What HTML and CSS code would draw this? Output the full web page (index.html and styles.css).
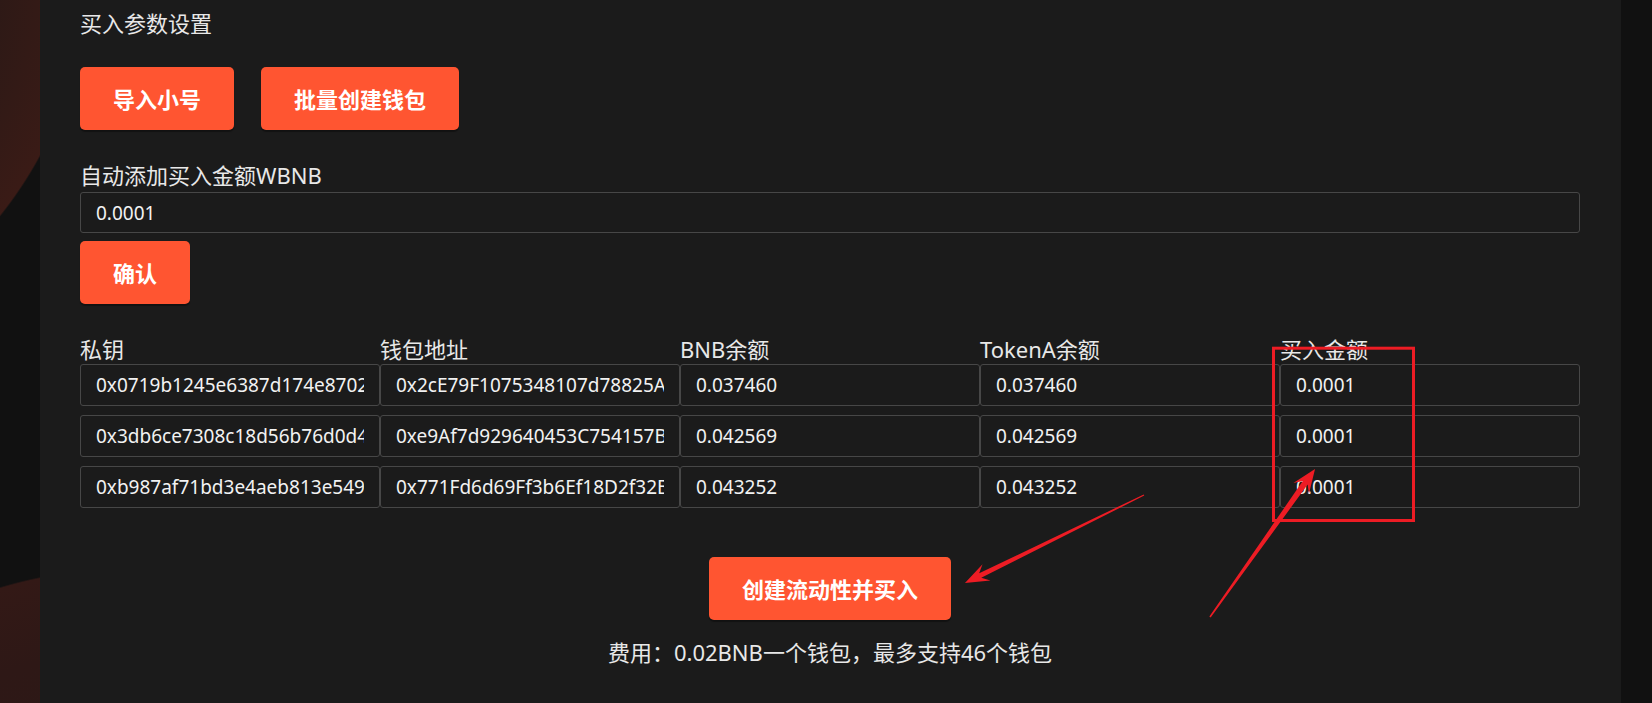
FILE: index.html
```html
<!DOCTYPE html>
<html lang="zh-CN">
<head>
<meta charset="utf-8">
<title>买入参数设置</title>
<link rel="stylesheet" href="styles.css">
</head>
<body>
<div class="page">
  <main class="panel">
    <h2 class="title">买入参数设置</h2>
    <div class="btn-row">
      <button class="btn">导入小号</button>
      <button class="btn">批量创建钱包</button>
    </div>
    <label class="field-label">自动添加买入金额WBNB</label>
    <input class="input field" value="0.0001">
    <button class="btn btn-confirm">确认</button>
    <div class="table">
      <div class="thead">
        <div>私钥</div>
        <div>钱包地址</div>
        <div>BNB余额</div>
        <div>TokenA余额</div>
        <div>买入金额</div>
      </div>
      <div class="tbody">
        <input class="input" value="0x0719b1245e6387d174e8702c5f1a93b6e04d7c28f91a6b35e2d4c7089f1b3a6e">
        <input class="input" value="0x2cE79F1075348107d78825A3b9E1c4D6f2a7B0e5">
        <input class="input" value="0.037460">
        <input class="input" value="0.037460">
        <input class="input" value="0.0001">
        <input class="input" value="0x3db6ce7308c18d56b76d0d4a9e2f1c57b83a6d90e4f2c1b7a5d38e6f09c2b41a">
        <input class="input" value="0xe9Af7d929640453C754157B2d8F0a6C3e1b4D9f7">
        <input class="input" value="0.042569">
        <input class="input" value="0.042569">
        <input class="input" value="0.0001">
        <input class="input" value="0xb987af71bd3e4aeb813e5492c0d7f6a1e3b58c2d9f07a4e61b3c8d5f2a790e14">
        <input class="input" value="0x771Fd6d69Ff3b6Ef18D2f32B5c0A9e4d7F1b6C38">
        <input class="input" value="0.043252">
        <input class="input" value="0.043252">
        <input class="input" value="0.0001">
      </div>
    </div>
    <div class="actions">
      <button class="btn">创建流动性并买入</button>
    </div>
    <p class="fee">费用：0.02BNB一个钱包，最多支持46个钱包</p>
  </main>
  <svg class="annot" width="1652" height="703" viewBox="0 0 1652 703">
    <rect x="1273.5" y="348.2" width="140" height="172.3" fill="none" stroke="#ed1c24" stroke-width="3"/>
    <g transform="translate(1144 495) rotate(153.82)">
      <polygon fill="#ed1c24" points="0,-0.6 182.5,-2.4 175.5,-9 199.5,0 175.5,9 182.5,2.4 0,0.6"/>
    </g>
    <g transform="translate(1210 617) rotate(-54.64)">
      <polygon fill="#ed1c24" points="0,-0.8 164.5,-3 157.5,-9.5 181.5,0 157.5,9.5 164.5,3 0,0.8"/>
    </g>
  </svg>
</div>
</body>
</html>
```
FILE: styles.css
```css
* {
  box-sizing: border-box;
}

html,
body {
  margin: 0;
  height: 100%;
}

body {
  background-color: #111111;
  background-image:
    radial-gradient(circle 402px at -313px -35px, #281816 0%, #2c1916 75%, #3a1b16 99.6%, rgba(17, 17, 17, 0) 100%),
    radial-gradient(circle 413px at 120px 982px, #2a1917 0%, #2e1816 80%, #331916 99.6%, rgba(17, 17, 17, 0) 100%);
  background-repeat: no-repeat;
  font-family: "Noto Sans", "Noto Sans CJK SC", sans-serif;
  overflow: hidden;
}

.page {
  position: relative;
  width: 1652px;
  height: 703px;
}

.panel {
  margin-left: 40px;
  width: 1581px;
  height: 703px;
  background: #1b1b1b;
  padding: 12px 41px 0 40px;
  display: flex;
  flex-direction: column;
  align-items: flex-start;
}

.title {
  margin: 0;
  font-size: 22px;
  line-height: 22px;
  font-weight: normal;
  color: #e8e8e8;
}

.btn-row {
  display: flex;
  gap: 27px;
  margin-top: 33px;
}

.btn {
  display: flex;
  align-items: center;
  justify-content: center;
  height: 63px;
  padding: 0 33px;
  border: 0;
  border-radius: 5px;
  background: #ff5531;
  color: #ffffff;
  font-family: "Noto Sans", "Noto Sans CJK SC", sans-serif;
  font-size: 22px;
  font-weight: 700;
  line-height: 1;
  box-shadow: 0 2px 1px rgba(0, 0, 0, 0.35);
}

.field-label {
  margin-top: 34px;
  font-size: 22px;
  line-height: 22px;
  color: #e8e8e8;
}

.input {
  display: block;
  border: 1px solid #474747;
  border-radius: 3px;
  background: #1b1b1b;
  color: #f2f2f2;
  font-family: "Noto Sans", "Noto Sans CJK SC", sans-serif;
  font-size: 19px;
  padding: 0 15px;
  outline: none;
  margin: 0;
}

.field {
  margin-top: 6px;
  width: 1500px;
  height: 41px;
}

.btn-confirm {
  margin-top: 8px;
}

.table {
  margin-top: 34px;
  width: 1500px;
}

.thead {
  display: grid;
  grid-template-columns: repeat(5, 300px);
  font-size: 22px;
  line-height: 22px;
  color: #e8e8e8;
}

.tbody {
  display: grid;
  grid-template-columns: repeat(5, 300px);
  row-gap: 9px;
  margin-top: 4px;
}

.tbody .input {
  width: 100%;
  height: 42px;
}

.actions {
  align-self: stretch;
  display: flex;
  justify-content: center;
  margin-top: 49px;
}

.fee {
  align-self: stretch;
  text-align: center;
  margin: 21px 0 0;
  font-size: 22px;
  line-height: 22px;
  color: #e8e8e8;
}

.annot {
  position: absolute;
  left: 0;
  top: 0;
  pointer-events: none;
}
```
